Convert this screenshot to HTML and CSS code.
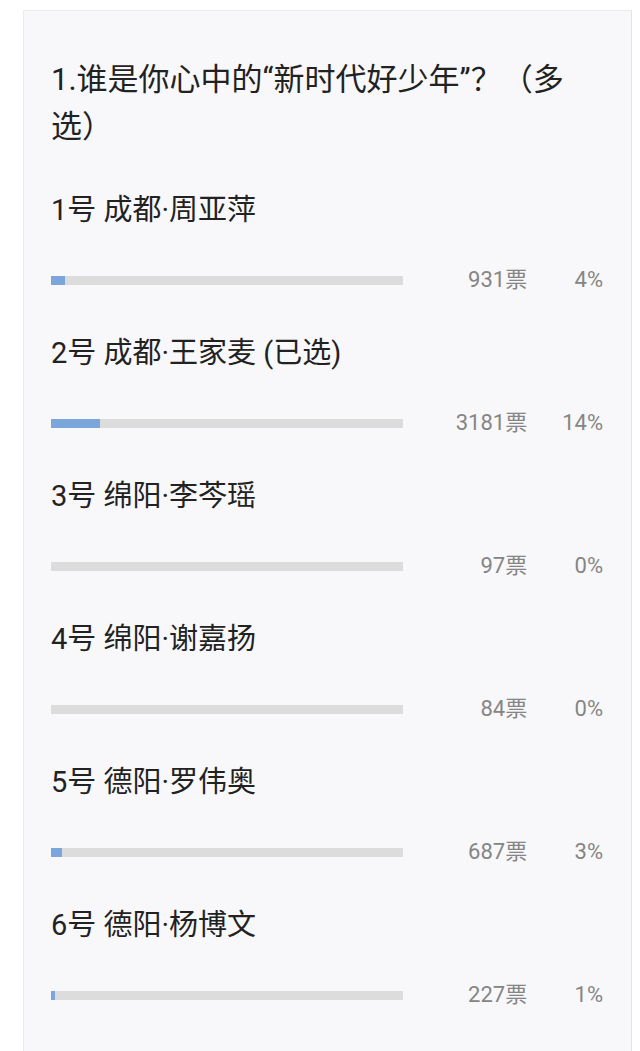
FILE: index.html
```html
<!DOCTYPE html>
<html lang="zh-CN">
<head>
    <meta charset="UTF-8">
    <meta name="viewport" content="width=device-width, initial-scale=1.0">
    <title>投票结果</title>
    <link rel="stylesheet" href="styles.css">
</head>
<body>
    <div id="vote-card">
        <div class="question">1.谁是你心中的“新时代好少年”？（多选）</div>

        <div class="option">
            <div class="option-name">1号 成都·周亚萍</div>
            <div class="option-stats">
                <div class="bar"><div class="bar-fill" style="width: 4%"></div></div>
                <span class="votes">931票</span>
                <span class="percent">4%</span>
            </div>
        </div>

        <div class="option">
            <div class="option-name">2号 成都·王家麦 (已选)</div>
            <div class="option-stats">
                <div class="bar"><div class="bar-fill" style="width: 14%"></div></div>
                <span class="votes">3181票</span>
                <span class="percent">14%</span>
            </div>
        </div>

        <div class="option">
            <div class="option-name">3号 绵阳·李芩瑶</div>
            <div class="option-stats">
                <div class="bar"><div class="bar-fill" style="width: 0%"></div></div>
                <span class="votes">97票</span>
                <span class="percent">0%</span>
            </div>
        </div>

        <div class="option">
            <div class="option-name">4号 绵阳·谢嘉扬</div>
            <div class="option-stats">
                <div class="bar"><div class="bar-fill" style="width: 0%"></div></div>
                <span class="votes">84票</span>
                <span class="percent">0%</span>
            </div>
        </div>

        <div class="option">
            <div class="option-name">5号 德阳·罗伟奥</div>
            <div class="option-stats">
                <div class="bar"><div class="bar-fill" style="width: 3%"></div></div>
                <span class="votes">687票</span>
                <span class="percent">3%</span>
            </div>
        </div>

        <div class="option">
            <div class="option-name">6号 德阳·杨博文</div>
            <div class="option-stats">
                <div class="bar"><div class="bar-fill" style="width: 1%"></div></div>
                <span class="votes">227票</span>
                <span class="percent">1%</span>
            </div>
        </div>
    </div>
</body>
</html>
```

FILE: styles.css
```css
body {
    font-family: Roboto, "Noto Sans CJK SC", sans-serif;
    background-color: #fff;
    margin: 0;
    padding: 0;
}
#vote-card {
    margin: 10px 0 0 23px;
    width: 609px;
    min-height: 1060px;
    box-sizing: border-box;
    padding: 45px 28px 0 27px;
    background-color: #f8f8fa;
    border: 1px solid #ececee;
    border-right-color: #e4e4e6;
}
.question {
    width: 540px;
    font-size: 31px;
    line-height: 47px;
    color: #222;
    margin-bottom: 2px;
}
.option {
    padding-top: 38px;
}
.option-name {
    font-size: 29px;
    line-height: 40px;
    color: #222;
}
.option-stats {
    display: flex;
    align-items: center;
    height: 30px;
    margin-top: 35px;
}
.bar {
    width: 353px;
    height: 9px;
    background-color: #dcdcdd;
}
.bar-fill {
    height: 100%;
    background-color: #7ba6db;
}
.votes,
.percent {
    font-size: 22px;
    line-height: 26px;
    color: #858585;
    text-align: right;
}
.votes {
    width: 124px;
}
.percent {
    width: 76px;
}
```
